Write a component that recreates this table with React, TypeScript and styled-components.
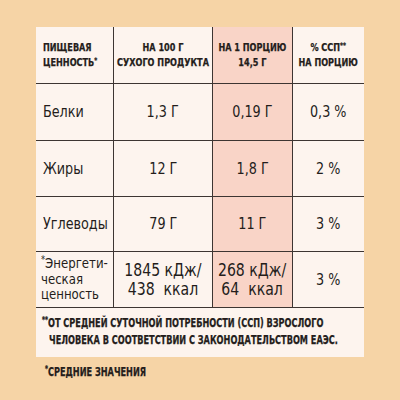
import styled, { createGlobalStyle } from "styled-components";
import { Fragment } from "react";

const GlobalStyle = createGlobalStyle`
  html, body {
    margin: 0;
    padding: 0;
    background: #f6d4a6;
  }
  body {
    font-family: "DejaVu Sans", "Liberation Sans", sans-serif;
    font-stretch: condensed;
    color: #241d1b;
  }
`;

const rows = [
  { name: "Белки", dry: "1,3 Г", portion: "0,19 Г", pct: "0,3 %" },
  { name: "Жиры", dry: "12 Г", portion: "1,8 Г", pct: "2 %" },
  { name: "Углеводы", dry: "79 Г", portion: "11 Г", pct: "3 %" },
];

export default function App() {
  return (
    <>
      <GlobalStyle />
      <Page>
        <Card>
          <Grid>
            <HeadCell>
              <Squeeze $origin="left">
                ПИЩЕВАЯ
                <br />
                ЦЕННОСТЬ<Sup>*</Sup>
              </Squeeze>
            </HeadCell>
            <HeadCell $center>
              <Squeeze>
                НА 100 Г
                <br />
                СУХОГО ПРОДУКТА
              </Squeeze>
            </HeadCell>
            <HeadCell $center $accent>
              <Squeeze>
                НА 1 ПОРЦИЮ
                <br />
                14,5 Г
              </Squeeze>
            </HeadCell>
            <HeadCell $center $last>
              <Squeeze>
                % ССП<Sup>**</Sup>
                <br />
                НА ПОРЦИЮ
              </Squeeze>
            </HeadCell>
            {rows.map((r) => (
              <Fragment key={r.name}>
                <Cell>
                  <Squeeze $origin="left" $scale={0.86}>
                    {r.name}
                  </Squeeze>
                </Cell>
                <Cell $center>
                  <Squeeze $scale={0.86}>{r.dry}</Squeeze>
                </Cell>
                <Cell $center $accent>
                  <Squeeze $scale={0.86}>{r.portion}</Squeeze>
                </Cell>
                <Cell $center $last>
                  <Squeeze $scale={0.86}>{r.pct}</Squeeze>
                </Cell>
              </Fragment>
            ))}
            <EnergyName>
              <Squeeze $origin="left" $scale={0.9}>
                <Sup>*</Sup>Энергети-
                <br />
                ческая
                <br />
                ценность
              </Squeeze>
            </EnergyName>
            <EnergyValue $center>
              <Squeeze $scale={0.92}>
                1845 кДж/
                <br />
                438&nbsp; ккал
              </Squeeze>
            </EnergyValue>
            <EnergyValue $center $accent>
              <Squeeze $scale={0.92}>
                268 кДж/
                <br />
                64&nbsp; ккал
              </Squeeze>
            </EnergyValue>
            <Cell $center $last>
              <Squeeze $scale={0.86}>3 %</Squeeze>
            </Cell>
          </Grid>
          <Footnote>
            <Squeeze $origin="left" $scale={0.79}>
              <Sup>**</Sup>ОТ СРЕДНЕЙ СУТОЧНОЙ ПОТРЕБНОСТИ (ССП) ВЗРОСЛОГО
              <br />
              <Indent>ЧЕЛОВЕКА В СООТВЕТСТВИИ С ЗАКОНОДАТЕЛЬСТВОМ ЕАЭС.</Indent>
            </Squeeze>
          </Footnote>
        </Card>
        <Note>
          <Squeeze $origin="left" $scale={0.79}>
            <Sup>*</Sup>СРЕДНИЕ ЗНАЧЕНИЯ
          </Squeeze>
        </Note>
      </Page>
    </>
  );
}

const Page = styled.div`
  width: 400px;
  height: 400px;
  padding: 27px 36px 0;
  box-sizing: border-box;
`;

const Card = styled.div`
  width: 328px;
  background: #fdf4ee;
`;

const Grid = styled.div`
  display: grid;
  grid-template-columns: 78px 99px 80px 71px;
  grid-template-rows: 57px 57px 56px 55px 56px;
`;

const Cell = styled.div<{ $center?: boolean; $accent?: boolean; $last?: boolean }>`
  box-sizing: border-box;
  display: flex;
  align-items: center;
  justify-content: ${(p) => (p.$center ? "center" : "flex-start")};
  text-align: ${(p) => (p.$center ? "center" : "left")};
  padding: ${(p) => (p.$center ? "0" : "0 0 0 7px")};
  background: ${(p) => (p.$accent ? "#f9d4c7" : "transparent")};
  border-right: ${(p) => (p.$last ? "none" : "1.5px solid #3d3532")};
  border-bottom: 1.5px solid #3d3532;
  font-size: 16.5px;
  line-height: 18px;
  white-space: nowrap;
`;

const HeadCell = styled(Cell)`
  font-weight: bold;
  font-size: 11px;
  line-height: 15px;
  -webkit-text-stroke: 0.25px #241d1b;
`;

const Squeeze = styled.span<{ $origin?: string; $scale?: number }>`
  display: inline-block;
  transform: scaleX(${(p) => p.$scale ?? 0.82});
  transform-origin: ${(p) => p.$origin ?? "center"};
  white-space: nowrap;
`;

const EnergyName = styled(Cell)`
  font-size: 14.5px;
  line-height: 15.5px;
  padding-left: 5px;
`;

const EnergyValue = styled(Cell)`
  font-size: 17px;
  line-height: 18.5px;
`;

const Sup = styled.span`
  font-size: 0.7em;
  vertical-align: 0.45em;
  line-height: 0;
`;

const Footnote = styled.div`
  padding: 7px 6px 9px;
  font-weight: bold;
  font-size: 11.5px;
  line-height: 16.5px;
  -webkit-text-stroke: 0.25px #241d1b;
`;

const Indent = styled.span`
  padding-left: 9px;
`;

const Note = styled.div`
  padding: 8px 0 0 9px;
  font-weight: bold;
  font-size: 11.5px;
  -webkit-text-stroke: 0.25px #241d1b;
`;
